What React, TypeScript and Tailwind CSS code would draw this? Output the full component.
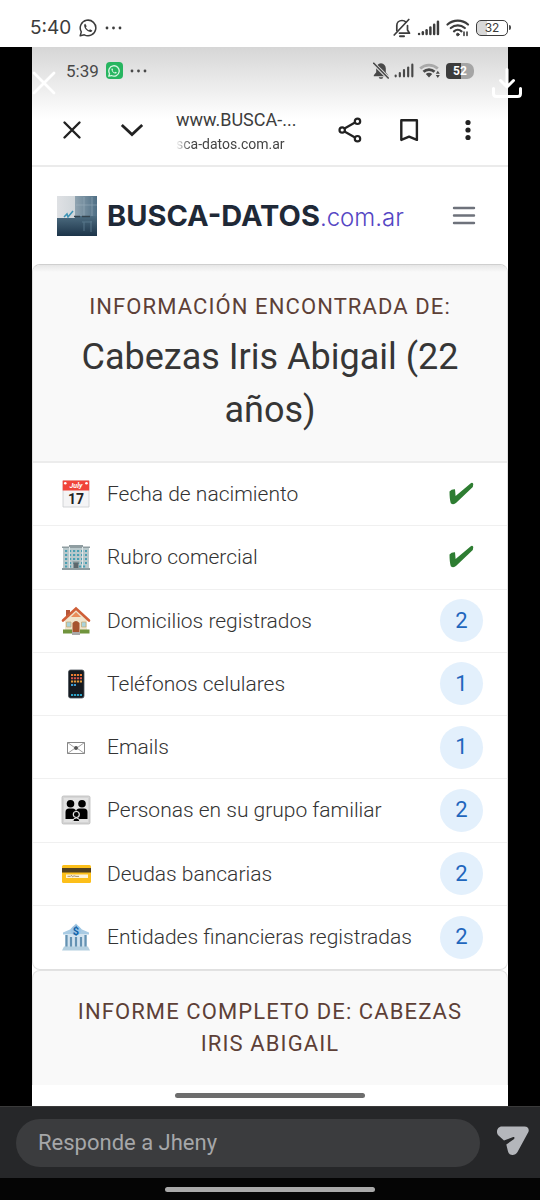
import type { ReactNode } from "react";

function WhatsAppGlyph({ className, weight = 1.5 }: { className?: string; weight?: number }) {
  return (
    <svg viewBox="0 0 18 18" className={className} fill="none" stroke="currentColor" strokeWidth={weight} strokeLinejoin="round">
      <path d="M1.2 16.8 2.3 12.9A7.8 7.8 0 1 1 5.3 15.8Z" />
      <path
        d="M6.3 4.8c-.8.3-1.3 1.1-1.1 2.2.4 2.8 3 5.4 5.9 5.9 1.2.1 2-.5 2.2-1.5l-2.3-1.2-1 1c-1.4-.5-2.6-1.7-3.1-3l.8-1z"
        fill="currentColor"
        stroke="none"
      />
    </svg>
  );
}

function Signal({ bars, className }: { bars: number[]; className?: string }) {
  return (
    <svg viewBox="0 0 24 18" className={className} stroke="currentColor" strokeWidth="2.6" strokeLinecap="round">
      {bars.map((h, i) => (
        <path key={i} d={`M${2 + i * (20 / (bars.length - 1))} 16v-${h}`} />
      ))}
    </svg>
  );
}

function Dots({ className }: { className?: string }) {
  return (
    <svg viewBox="0 0 18 4" className={className} fill="currentColor">
      <circle cx="2" cy="2" r="1.4" />
      <circle cx="8.5" cy="2" r="1.4" />
      <circle cx="15" cy="2" r="1.4" />
    </svg>
  );
}

function OuterStatusBar() {
  return (
    <header className="flex h-[47px] items-center justify-between bg-white pt-2 pr-8 pl-[30px] text-[#3c3c3c]">
      <div className="flex items-center gap-2">
        <span className="font-[Inter,sans-serif] text-[19px] leading-6">5:40</span>
        <WhatsAppGlyph className="size-[18px]" />
        <Dots className="h-1 w-[18px]" />
      </div>
      <div className="flex items-center gap-[6px]">
        <svg viewBox="0 0 18 20" className="h-5 w-[18px]" fill="none" stroke="currentColor" strokeWidth="1.7" strokeLinejoin="round" strokeLinecap="round">
          <path d="M3.8 12.5V7.5C3.8 4.5 6 2.5 9 2.5c1.7 0 3 .6 3.9 1.6M14.5 7.5v4.5l2 3.2H6.5" />
          <path d="M15.8 1.5 1.2 17" />
          <path d="M7 18.3h4" strokeWidth="2" />
        </svg>
        <Signal bars={[0.1, 2, 4, 7, 10, 13]} className="h-[17px] w-[23px]" />
        <svg viewBox="0 0 24 18" className="h-[18px] w-6" fill="none" stroke="currentColor" strokeWidth="2.2" strokeLinecap="round">
          <path d="M1.5 5.5a15.5 15.5 0 0 1 20.5 0M4.8 9a10.6 10.6 0 0 1 14 0M8 12.3a5.8 5.8 0 0 1 7.5 0" />
          <circle cx="11.8" cy="15.5" r="1.3" fill="currentColor" strokeWidth="1" />
          <path d="M18 13v3.5M21 13v3.5" strokeWidth="1.6" />
        </svg>
        <div className="relative flex h-4 w-8 items-center justify-center rounded-[5px] border border-[#3c3c3c] bg-linear-to-r from-[#d8d8d8] from-32% to-white to-32% font-[Inter,sans-serif] text-xs leading-3">
          32
          <span className="absolute -right-[4px] h-[5px] w-[2px] rounded-r bg-[#4a4a4a]" />
        </div>
      </div>
    </header>
  );
}

function InnerStatusBar() {
  return (
    <div className="flex h-[47px] items-center justify-between px-[34px] text-[#484848]">
      <div className="flex items-center gap-[7px]">
        <span className="font-[Roboto,sans-serif] text-[17px] leading-6">5:39</span>
        <span className="flex size-[17px] items-center justify-center rounded-[4px] bg-[#27b560] text-[#d9f5e3]">
          <WhatsAppGlyph className="size-3" weight={2} />
        </span>
        <Dots className="h-1 w-[18px]" />
      </div>
      <div className="flex items-center gap-[5px]">
        <svg viewBox="0 0 16 18" className="h-[18px] w-4" fill="currentColor">
          <path d="M8 1.2c3 .3 4.8 2.5 4.8 5.3v3.8l2.4 3v1H.8v-1l2.4-3V6.5C3.2 3.7 5 1.5 8 1.2zM5.8 15.3h4.4c-.3 2-4.1 2-4.4 0z" />
          <path d="M.3 1.2 15.5 16.2" stroke="#dedede" strokeWidth="3.5" />
          <path d="M.3.8 15.7 16.5" stroke="currentColor" strokeWidth="1.5" />
        </svg>
        <Signal bars={[1, 4, 7.5, 10.5, 14]} className="h-[17px] w-5" />
        <svg viewBox="0 0 22 17" className="h-[17px] w-[22px]" fill="none" strokeWidth="2.8">
          <path d="M1.2 6.5a13 13 0 0 1 17.6 0" stroke="#a9a9a9" />
          <path d="M4.5 9.8a8 8 0 0 1 11 0" stroke="currentColor" />
          <path d="m6.8 12 3.2 3.5L13.2 12a4.6 4.6 0 0 0-6.4 0z" fill="currentColor" />
          <path d="m18.8 8.8 2 3h-4zM18.8 16l2-3h-4z" fill="currentColor" />
        </svg>
        <div className="flex h-4 w-7 items-center justify-center rounded-l-[4px] rounded-r-[7px] bg-linear-to-r from-[#3c3c3c] from-52% to-[#a5a5a5] to-52% font-[Roboto,sans-serif] text-xs leading-3 font-bold text-white">
          52
        </div>
      </div>
    </div>
  );
}

function BrowserToolbar() {
  return (
    <div className="flex h-[73px] items-center border-b-2 border-[#ebebeb] px-7 text-[#222]">
      <button type="button" aria-label="Cerrar pestaña">
        <svg viewBox="0 0 24 24" className="size-6" stroke="currentColor" strokeWidth="2.4" strokeLinecap="round">
          <path d="m4.5 4.5 15 15M19.5 4.5l-15 15" />
        </svg>
      </button>
      <button type="button" aria-label="Minimizar" className="ml-9">
        <svg viewBox="0 0 24 24" className="size-6" fill="none" stroke="currentColor" strokeWidth="2.8">
          <path d="m1.8 7 10.2 9.5L22.2 7" />
        </svg>
      </button>
      <div className="ml-8 min-w-0 flex-1 pt-1 font-[Roboto,sans-serif]">
        <p className="text-lg leading-6 text-[#3d3d3d]">www.BUSCA-...</p>
        <p className="w-fit text-sm leading-6 whitespace-nowrap text-[#444] [mask-image:linear-gradient(to_right,transparent,black_14px)]">
          sca-datos.com.ar
        </p>
      </div>
      <div className="flex gap-[35px]">
        <button type="button" aria-label="Compartir">
          <svg viewBox="0 0 24 26" className="h-[26px] w-6" fill="none" stroke="currentColor" strokeWidth="2.2">
            <path d="m6.5 11.5 10.5-6M6.5 14.5l10.5 6" />
            <circle cx="4.2" cy="13" r="2.7" />
            <circle cx="19.5" cy="4.3" r="2.7" />
            <circle cx="19.5" cy="21.7" r="2.7" />
          </svg>
        </button>
        <button type="button" aria-label="Guardar">
          <svg viewBox="0 0 24 24" className="size-6" fill="none" stroke="currentColor" strokeWidth="2.4" strokeLinejoin="round">
            <path d="M4.3 2.3h15.6v19.6L12.1 18.6l-7.8 3.3z" />
          </svg>
        </button>
        <button type="button" aria-label="Más opciones">
          <svg viewBox="0 0 24 24" className="size-6" fill="currentColor">
            <circle cx="12" cy="4.5" r="2.6" />
            <circle cx="12" cy="12" r="2.6" />
            <circle cx="12" cy="19.5" r="2.6" />
          </svg>
        </button>
      </div>
    </div>
  );
}

function SiteHeader() {
  return (
    <div className="flex h-[97px] items-center justify-between bg-white pr-8 pl-[25px]">
      <a href="#" className="flex items-center gap-[10px]">
        <svg viewBox="0 0 40 40" className="size-10">
          <defs>
            <linearGradient id="sky" x1="0" x2="1">
              <stop offset="0" stopColor="#dfe1e4" />
              <stop offset=".45" stopColor="#d0d6da" />
              <stop offset=".46" stopColor="#8fa3b0" />
              <stop offset="1" stopColor="#4f6f85" />
            </linearGradient>
            <linearGradient id="floor" x2="0" y2="1">
              <stop offset="0" stopColor="#4d6c80" />
              <stop offset="1" stopColor="#1c3449" />
            </linearGradient>
          </defs>
          <path fill="url(#sky)" d="M0 0h40v40H0z" />
          <path fill="url(#floor)" d="M0 22h18v-2h22v20H0z" />
          <path d="M19 9h21M27 1v19M35 1v19" stroke="#a9bcc8" strokeWidth=".7" opacity=".6" />
          <path d="M25 26h10M27 26v9M34 25v11" stroke="#6e8fa3" strokeWidth="1.2" opacity=".5" />
          <path d="m7 21 3-3 1 3 5-6" stroke="#3b93b5" strokeWidth="1.5" fill="none" />
          <path d="M17 20.5h6M25 20.5h8" stroke="#34444f" strokeWidth="1.6" />
        </svg>
        <span className="font-[Inter,sans-serif] text-[29px] leading-9 font-bold text-[#1f2937]">
          BUSCA-DATOS<span className="text-2xl font-light text-[#5546c4]">.com.ar</span>
        </span>
      </a>
      <button type="button" aria-label="Menú">
        <svg viewBox="0 0 24 24" className="size-6" stroke="#6e727b" strokeWidth="2.4" strokeLinecap="round">
          <path d="M2 4h20M2 11.5h20M2 19h20" />
        </svg>
      </button>
    </div>
  );
}

function Icon({ children }: { children: ReactNode }) {
  return (
    <svg viewBox="0 0 30 30" className="size-[30px] shrink-0" aria-hidden="true">
      {children}
    </svg>
  );
}

const calendarIcon = (
  <Icon>
    <path d="M2 2h26v26H2z" fill="#f4f4f5" stroke="#c9cbce" strokeWidth=".8" />
    <path d="M1.7 1.5h26.5v10H1.7z" fill="#f0443a" />
    <circle cx="4.3" cy="4.3" r="1.3" fill="#fff" />
    <circle cx="25.5" cy="4.3" r="1.3" fill="#fff" />
    <text x="15" y="9.3" textAnchor="middle" fontSize="7" fontWeight="700" fontStyle="italic" fontFamily="Roboto, sans-serif" fill="#fff">
      July
    </text>
    <text x="15" y="24.5" textAnchor="middle" fontSize="14" fontWeight="700" fontFamily="Roboto, sans-serif" fill="#222">
      17
    </text>
  </Icon>
);

const officeIcon = (
  <Icon>
    <path d="M2 5h6V3h14v2h6v22H2z" fill="#b9c8cb" />
    <path d="M1 4.5h7V3h14v1.5h7V6H1zM1 26h28v2H1z" fill="#8f9da1" />
    <path d="M4 9h22M4 13h22M4 17h22M4 21h22M4 24.5h8M18 24.5h8" stroke="#4b9fb2" strokeWidth="1.8" strokeDasharray="2.2 1.8" />
    <path d="M8.5 5v21M21.5 5v21" stroke="#dfe7e8" strokeWidth="1" />
    <path d="M12.5 20h5v6h-5z" fill="#5d686d" />
    <path d="M11.5 19h7v1.5h-7z" fill="#9daaad" />
  </Icon>
);

const houseIcon = (
  <Icon>
    <path d="M5 4h4v7H5z" fill="#b5573a" />
    <path d="M15 4 4 14v12h22V14z" fill="#f0e5cd" />
    <path d="m2 14.5 13-12 13 12" stroke="#cf5f38" strokeWidth="2.6" fill="none" strokeLinecap="round" />
    <path d="m15 6-5 5h10z" fill="#e98c5a" />
    <path d="M11.5 26V17q3.5-4 7 0v9z" fill="#a6542f" />
    <path d="M5.5 16H10v5H5.5zM20.5 16H25v5h-4.5z" fill="#a9d3dc" stroke="#c6a76d" strokeWidth=".7" />
    <path d="M2 23.5h9v4H2zM19 23.5h9.5v4H19z" fill="#70943d" />
    <path d="M11 26h8v3h-8z" fill="#a9a9a9" />
  </Icon>
);

const phoneIcon = (
  <Icon>
    <rect x="7.5" y="1" width="15.5" height="28" rx="2" fill="#151a20" stroke="#4c545b" strokeWidth=".8" />
    <path d="M10 6h11" stroke="#e97c32" strokeWidth="2" strokeDasharray="2.2 .8" />
    <path d="M10 9.3h11" stroke="#d7564b" strokeWidth="2" strokeDasharray="2.2 .8" />
    <path d="M10 12.6h11" stroke="#e39a3b" strokeWidth="2" strokeDasharray="2.2 .8" />
    <path d="M10 16h5" stroke="#3d9bd1" strokeWidth="2" strokeDasharray="2.2 .8" />
    <path d="M10 26h11" stroke="#2da1c4" strokeWidth="2" strokeDasharray="2.2 .8" />
  </Icon>
);

const mailIcon = (
  <Icon>
    <path d="M6.5 10.5h17v11h-17z" fill="#fff" stroke="#888" strokeWidth="1" />
    <path d="m6.5 10.5 7 5M23.5 10.5l-7 5M6.5 21.5l7-5M23.5 21.5l-7-5" stroke="#888" strokeWidth=".8" />
    <circle cx="15" cy="16" r="2" fill="#555" />
  </Icon>
);

const familyIcon = (
  <Icon>
    <rect x="1" y="1" width="28" height="28" rx="1.5" fill="#d5d5d5" stroke="#bbb" strokeWidth=".8" />
    <path d="M3 3h24v24H3z" fill="#e2e2e2" />
    <circle cx="9.5" cy="8.8" r="3.8" />
    <circle cx="21" cy="8.8" r="3.8" />
    <path d="M4.5 24V17q0-3.5 3.5-3.5h3.5q3.5 0 3.5 3.5 0-3.5 3.5-3.5H23q3.5 0 3.5 3.5v7z" />
    <circle cx="15.3" cy="19.5" r="3" stroke="#e2e2e2" strokeWidth="1.2" />
    <path d="M11.8 26.5q0-3.5 3.5-3.5t3.5 3.5z" stroke="#e2e2e2" />
  </Icon>
);

const cardIcon = (
  <Icon>
    <rect x="1" y="6" width="29" height="18" rx="1.5" fill="#fcbf1a" />
    <path d="M1 9h29v4.5H1z" fill="#51401f" />
    <path d="M5 15.5h22V19H5z" fill="#fdf3d8" />
    <path d="M6.5 17.3h3l1-1 1 1.5 1.5-1 2 .6h3" stroke="#8d795c" strokeWidth=".8" fill="none" />
  </Icon>
);

const bankIcon = (
  <Icon>
    <path d="m15 1.5 6 6 7 3v2H2v-2l7-3z" fill="#a9cbe3" />
    <path d="M4 12.5h22V25H4z" fill="#d2e3ef" />
    <path d="M5.5 13v12M10 15v10M15 15v10M20 15v10M24.5 13v12" stroke="#6492b2" strokeWidth="2.2" />
    <path d="M3 24.5h24l2 4H1z" fill="#b3cfe0" />
    <circle cx="15" cy="8.5" r="5" fill="#9fc7e6" />
    <text x="15" y="12.5" textAnchor="middle" fontSize="11" fontWeight="700" fontFamily="Roboto, sans-serif" fill="#1262a8">
      $
    </text>
  </Icon>
);

// Entries without a count only show a tick
const entries: { label: string; icon: ReactNode; count?: number }[] = [
  { label: "Fecha de nacimiento", icon: calendarIcon },
  { label: "Rubro comercial", icon: officeIcon },
  { label: "Domicilios registrados", icon: houseIcon, count: 2 },
  { label: "Teléfonos celulares", icon: phoneIcon, count: 1 },
  { label: "Emails", icon: mailIcon, count: 1 },
  { label: "Personas en su grupo familiar", icon: familyIcon, count: 2 },
  { label: "Deudas bancarias", icon: cardIcon, count: 2 },
  { label: "Entidades financieras registradas", icon: bankIcon, count: 2 },
];

function ResultCard() {
  return (
    <section className="overflow-hidden rounded-lg border border-[#e0e0e0] border-t-[#cfcfcf] bg-white">
      <div className="border-b-2 border-[#ececec] bg-[linear-gradient(#e6e6e6,#f9f9f9_7px)] px-6 pt-[26px] pb-6 text-center">
        <h2 className="text-[22px] leading-8 tracking-wider text-[#5d4037]">INFORMACIÓN ENCONTRADA DE:</h2>
        <h1 className="mt-2 text-4xl leading-[53px] text-[#363636]">Cabezas Iris Abigail (22 años)</h1>
      </div>
      <ul className="grid min-h-[506px] auto-rows-fr divide-y divide-[#f0f0f0]">
        {entries.map((entry) => (
          <li key={entry.label} className="flex items-center pr-6 pl-7">
            {entry.icon}
            <span className="ml-4 flex-1 text-[21px] leading-7 font-light text-[#333]">{entry.label}</span>
            {entry.count === undefined ? (
              <svg viewBox="0 0 26 24" className="mr-[9px] h-6 w-[26px]" fill="#2e7d32" role="img" aria-label="Sí">
                <path d="M1.5 9.5Q3.5 7 7 7.2L7.6 14 22.8 1.2Q24.5.2 25.3 2L24.8 5 8.5 20.5Q5.5 23.5 2.8 21.3Q1.5 17 1.5 9.5z" />
              </svg>
            ) : (
              <span className="flex size-[43px] items-center justify-center rounded-full bg-[#e3f0fc] text-[22px] leading-7 text-[#1f66bd]">
                {entry.count}
              </span>
            )}
          </li>
        ))}
      </ul>
    </section>
  );
}

function Composer() {
  return (
    <form className="flex h-[72px] items-center gap-4 border-t border-[#3a3a3a] bg-[#262729] pr-[10px] pl-4">
      <input
        type="text"
        aria-label="Respuesta"
        placeholder="Responde a Jheny"
        className="h-12 min-w-0 flex-1 rounded-full bg-[#3b3c3e] px-[22px] font-[Roboto,sans-serif] text-[22px] text-white outline-none placeholder:text-[#a6a7a9]"
      />
      <button type="button" aria-label="Enviar" className="mb-1">
        <svg viewBox="0 0 34 32" className="h-8 w-[34px]" fill="#b4b6bb">
          <path d="M6 1.5h22.5c3.6 0 5.3 3 3.6 6L21.5 27c-2.3 4.2-8.3 4-9.5-.5l-1.7-7 7.5-5.2c1.5-1.2.5-2.8-1.2-2L8 15.5 2.5 10.5C-.5 7.5 1 1.5 6 1.5z" />
        </svg>
      </button>
    </form>
  );
}

export default function App() {
  return (
    <div className="flex min-h-screen flex-col bg-black">
      <OuterStatusBar />
      <main className="relative flex-1 px-8">
        <div className="bg-white bg-[linear-gradient(#d6d6d6,#ffffff_72px)] font-[Roboto,sans-serif]">
          <InnerStatusBar />
          <BrowserToolbar />
          <SiteHeader />
          <ResultCard />
          <section className="rounded-t-lg border border-b-0 border-[#e2e2e2] bg-[#f9f9f9] px-6 py-[25px] text-center">
            <h2 className="text-[22px] leading-8 tracking-wider text-[#5d4037]">
              INFORME COMPLETO DE: CABEZAS IRIS ABIGAIL
            </h2>
          </section>
          <div className="flex h-[21px] items-center justify-center bg-white">
            <div className="h-[5px] w-2/5 rounded-full bg-[#6d6d6d]" />
          </div>
        </div>
        <button type="button" aria-label="Cerrar" className="absolute top-6 left-8">
          <svg viewBox="0 0 24 24" className="size-6" stroke="#fff" strokeWidth="2.8" strokeLinecap="round">
            <path d="m2 2 20 20M22 2 2 22" />
          </svg>
        </button>
        <button type="button" aria-label="Descargar" className="absolute top-5 right-[17px]">
          <svg viewBox="0 0 32 32" className="size-8" fill="none" stroke="#fff" strokeWidth="3" strokeLinecap="round" strokeLinejoin="round">
            <path d="M16 2.5V20M9.5 13.5 16 20l6.5-6.5M2.5 21.5v5q0 3 3 3h21q3 0 3-3v-5" />
          </svg>
        </button>
      </main>
      <Composer />
      <div className="flex h-[22px] items-center justify-center bg-[#050505]">
        <div className="h-[5px] w-[39%] rounded-full bg-[#a9a9a9]" />
      </div>
    </div>
  );
}
